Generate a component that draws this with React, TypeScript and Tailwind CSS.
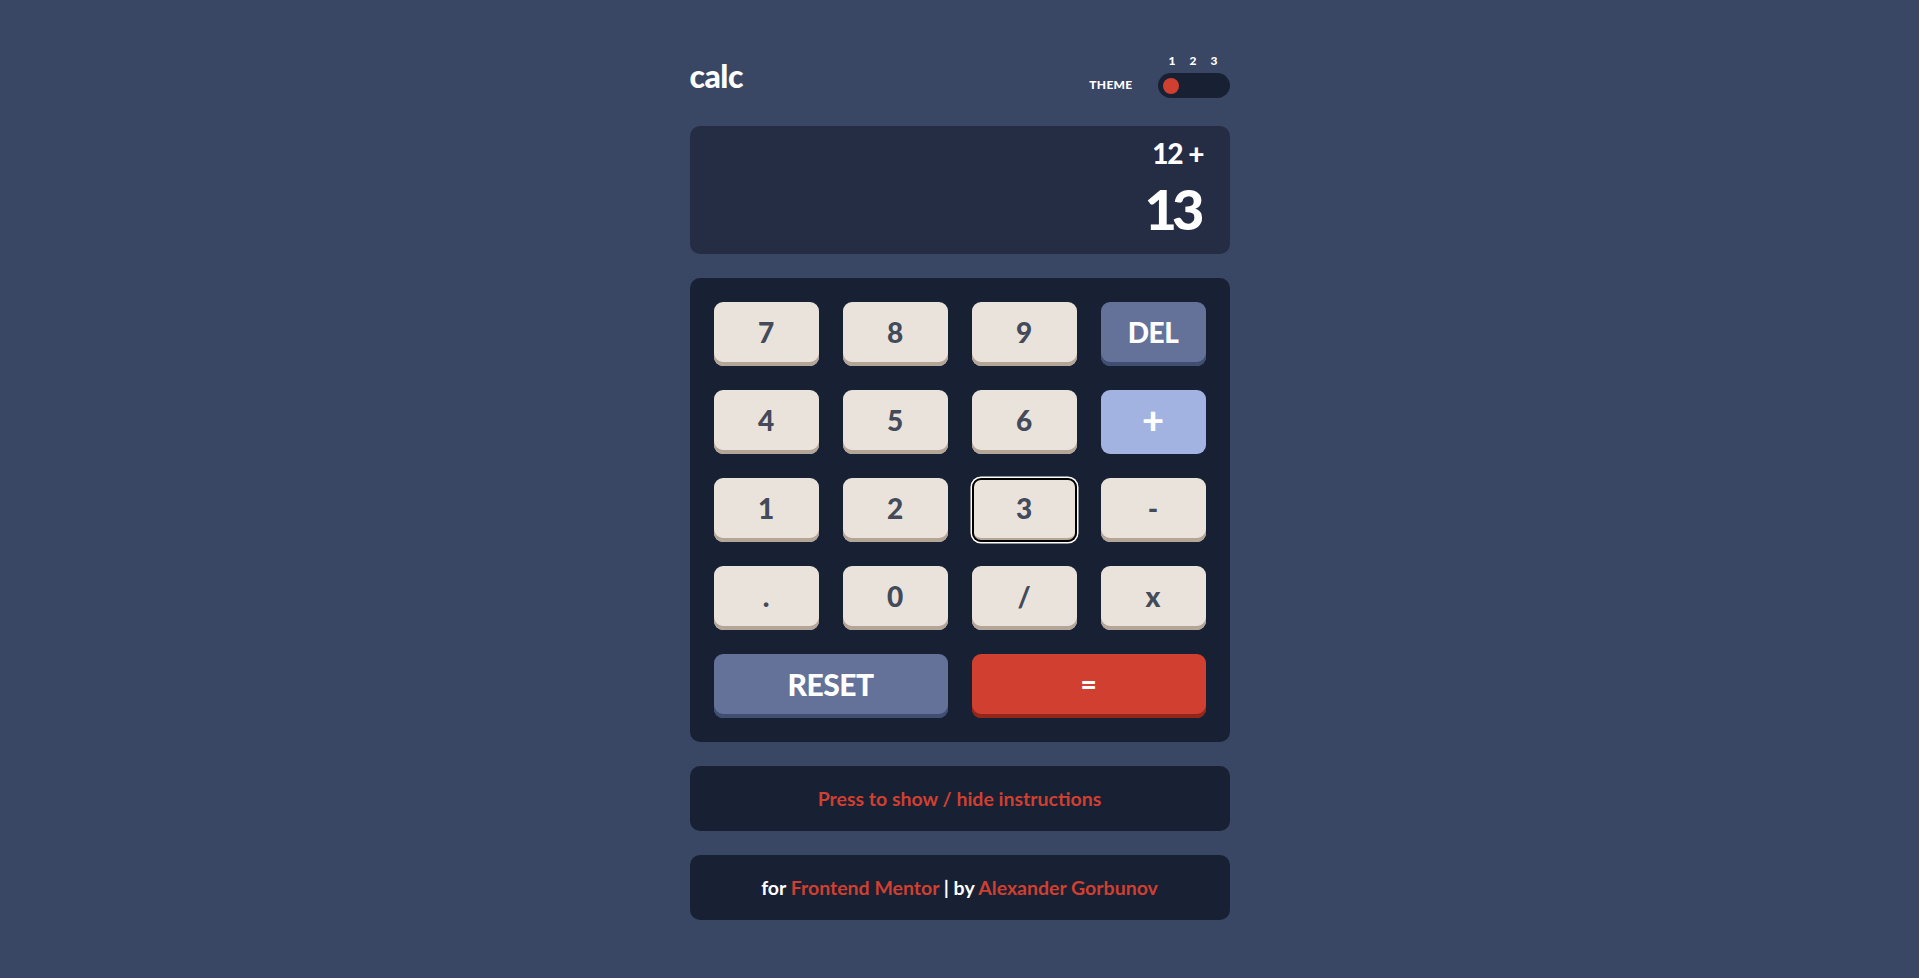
import React from "react";

const font = { fontFamily: "Lato, 'Noto Sans', sans-serif" };

type K = { label: string; kind: "num" | "del" | "op" | "focus" };

const keys: K[] = [
  { label: "7", kind: "num" },
  { label: "8", kind: "num" },
  { label: "9", kind: "num" },
  { label: "DEL", kind: "del" },
  { label: "4", kind: "num" },
  { label: "5", kind: "num" },
  { label: "6", kind: "num" },
  { label: "+", kind: "op" },
  { label: "1", kind: "num" },
  { label: "2", kind: "num" },
  { label: "3", kind: "focus" },
  { label: "-", kind: "num" },
  { label: ".", kind: "num" },
  { label: "0", kind: "num" },
  { label: "/", kind: "num" },
  { label: "x", kind: "num" },
];

function Key({ k }: { k: K }) {
  if (k.kind === "del") {
    return (
      <button className="h-16 rounded-[9px] bg-[#647198] shadow-[inset_0_-4px_0_#414e73] text-white text-[28px] font-black leading-none pb-1 flex items-center justify-center tracking-[-0.5px]">
        {k.label}
      </button>
    );
  }
  if (k.kind === "op") {
    return (
      <button className="h-16 rounded-[9px] bg-[#a2b3e1] text-white text-[38px] font-black leading-none pb-[7px] flex items-center justify-center">
        {k.label}
      </button>
    );
  }
  if (k.kind === "focus") {
    return (
      <button className="h-16 rounded-[9px] bg-[#eae3dc] shadow-[inset_0_0_0_2px_#000,inset_0_-4px_0_#b4a597,0_0_0_1.5px_#fff] text-[#434a59] text-[28px] font-black leading-none pb-1 flex items-center justify-center">
        {k.label}
      </button>
    );
  }
  return (
    <button className="h-16 rounded-[9px] bg-[#eae3dc] shadow-[inset_0_-4px_0_#b4a597] text-[#434a59] text-[28px] font-black leading-none pb-1 flex items-center justify-center">
      {k.label}
    </button>
  );
}

export default function App() {
  return (
    <div className="min-h-screen w-full bg-[#3a4764] flex justify-center" style={font}>
      <div className="w-[540px] pt-[55px]">
        <header className="flex items-end justify-between">
          <div className="text-white text-[32px] font-black leading-none mb-[6px] tracking-[-0.5px]">calc</div>
          <div className="flex items-end gap-[25px]">
            <div className="text-white text-[12px] font-black leading-3 tracking-[0.3px] mb-[7px]">THEME</div>
            <div className="flex flex-col">
              <div className="flex text-white text-[12px] font-black leading-3 mb-[6px] pl-[11px] pr-[12px] justify-between">
                <span>1</span>
                <span>2</span>
                <span>3</span>
              </div>
              <div className="w-[72px] h-[25px] rounded-full bg-[#182034] flex items-center pl-[5px]">
                <div className="w-[16px] h-[16px] rounded-full bg-[#d03f2f]" />
              </div>
            </div>
          </div>
        </header>

        <div className="mt-[28px] h-32 rounded-[10px] bg-[#242d44] flex flex-col items-end px-[26px] pt-[13px] text-white font-black">
          <div className="text-[28px] leading-none tracking-[-1px]">12 +</div>
          <div className="text-[56px] leading-none mt-[14px] tracking-[-5px] pr-[4px]">13</div>
        </div>

        <div className="mt-6 rounded-[10px] bg-[#182034] p-6 grid grid-cols-4 gap-x-6 gap-y-6">
          {keys.map((k, i) => (
            <Key key={i} k={k} />
          ))}
          <button className="col-span-2 h-16 rounded-[9px] bg-[#647198] shadow-[inset_0_-4px_0_#414e73] text-white text-[30px] font-black leading-none pb-1 flex items-center justify-center tracking-[-0.5px]">
            RESET
          </button>
          <button className="col-span-2 h-16 rounded-[9px] bg-[#d03f2f] shadow-[inset_0_-4px_0_#93261a] text-white text-[28px] font-black leading-none pb-1 flex items-center justify-center">
            =
          </button>
        </div>

        <div className="mt-6 h-[65px] rounded-[10px] bg-[#182034] flex items-center justify-center text-[#d03f2f] text-[19.5px] font-bold">
          Press to show / hide instructions
        </div>

        <div className="mt-6 h-[65px] rounded-[10px] bg-[#182034] flex items-center justify-center text-white text-[19.5px] font-bold">
          <span>
            for <span className="text-[#d03f2f]">Frontend Mentor</span> | by{" "}
            <span className="text-[#d03f2f]">Alexander Gorbunov</span>
          </span>
        </div>
      </div>
    </div>
  );
}
